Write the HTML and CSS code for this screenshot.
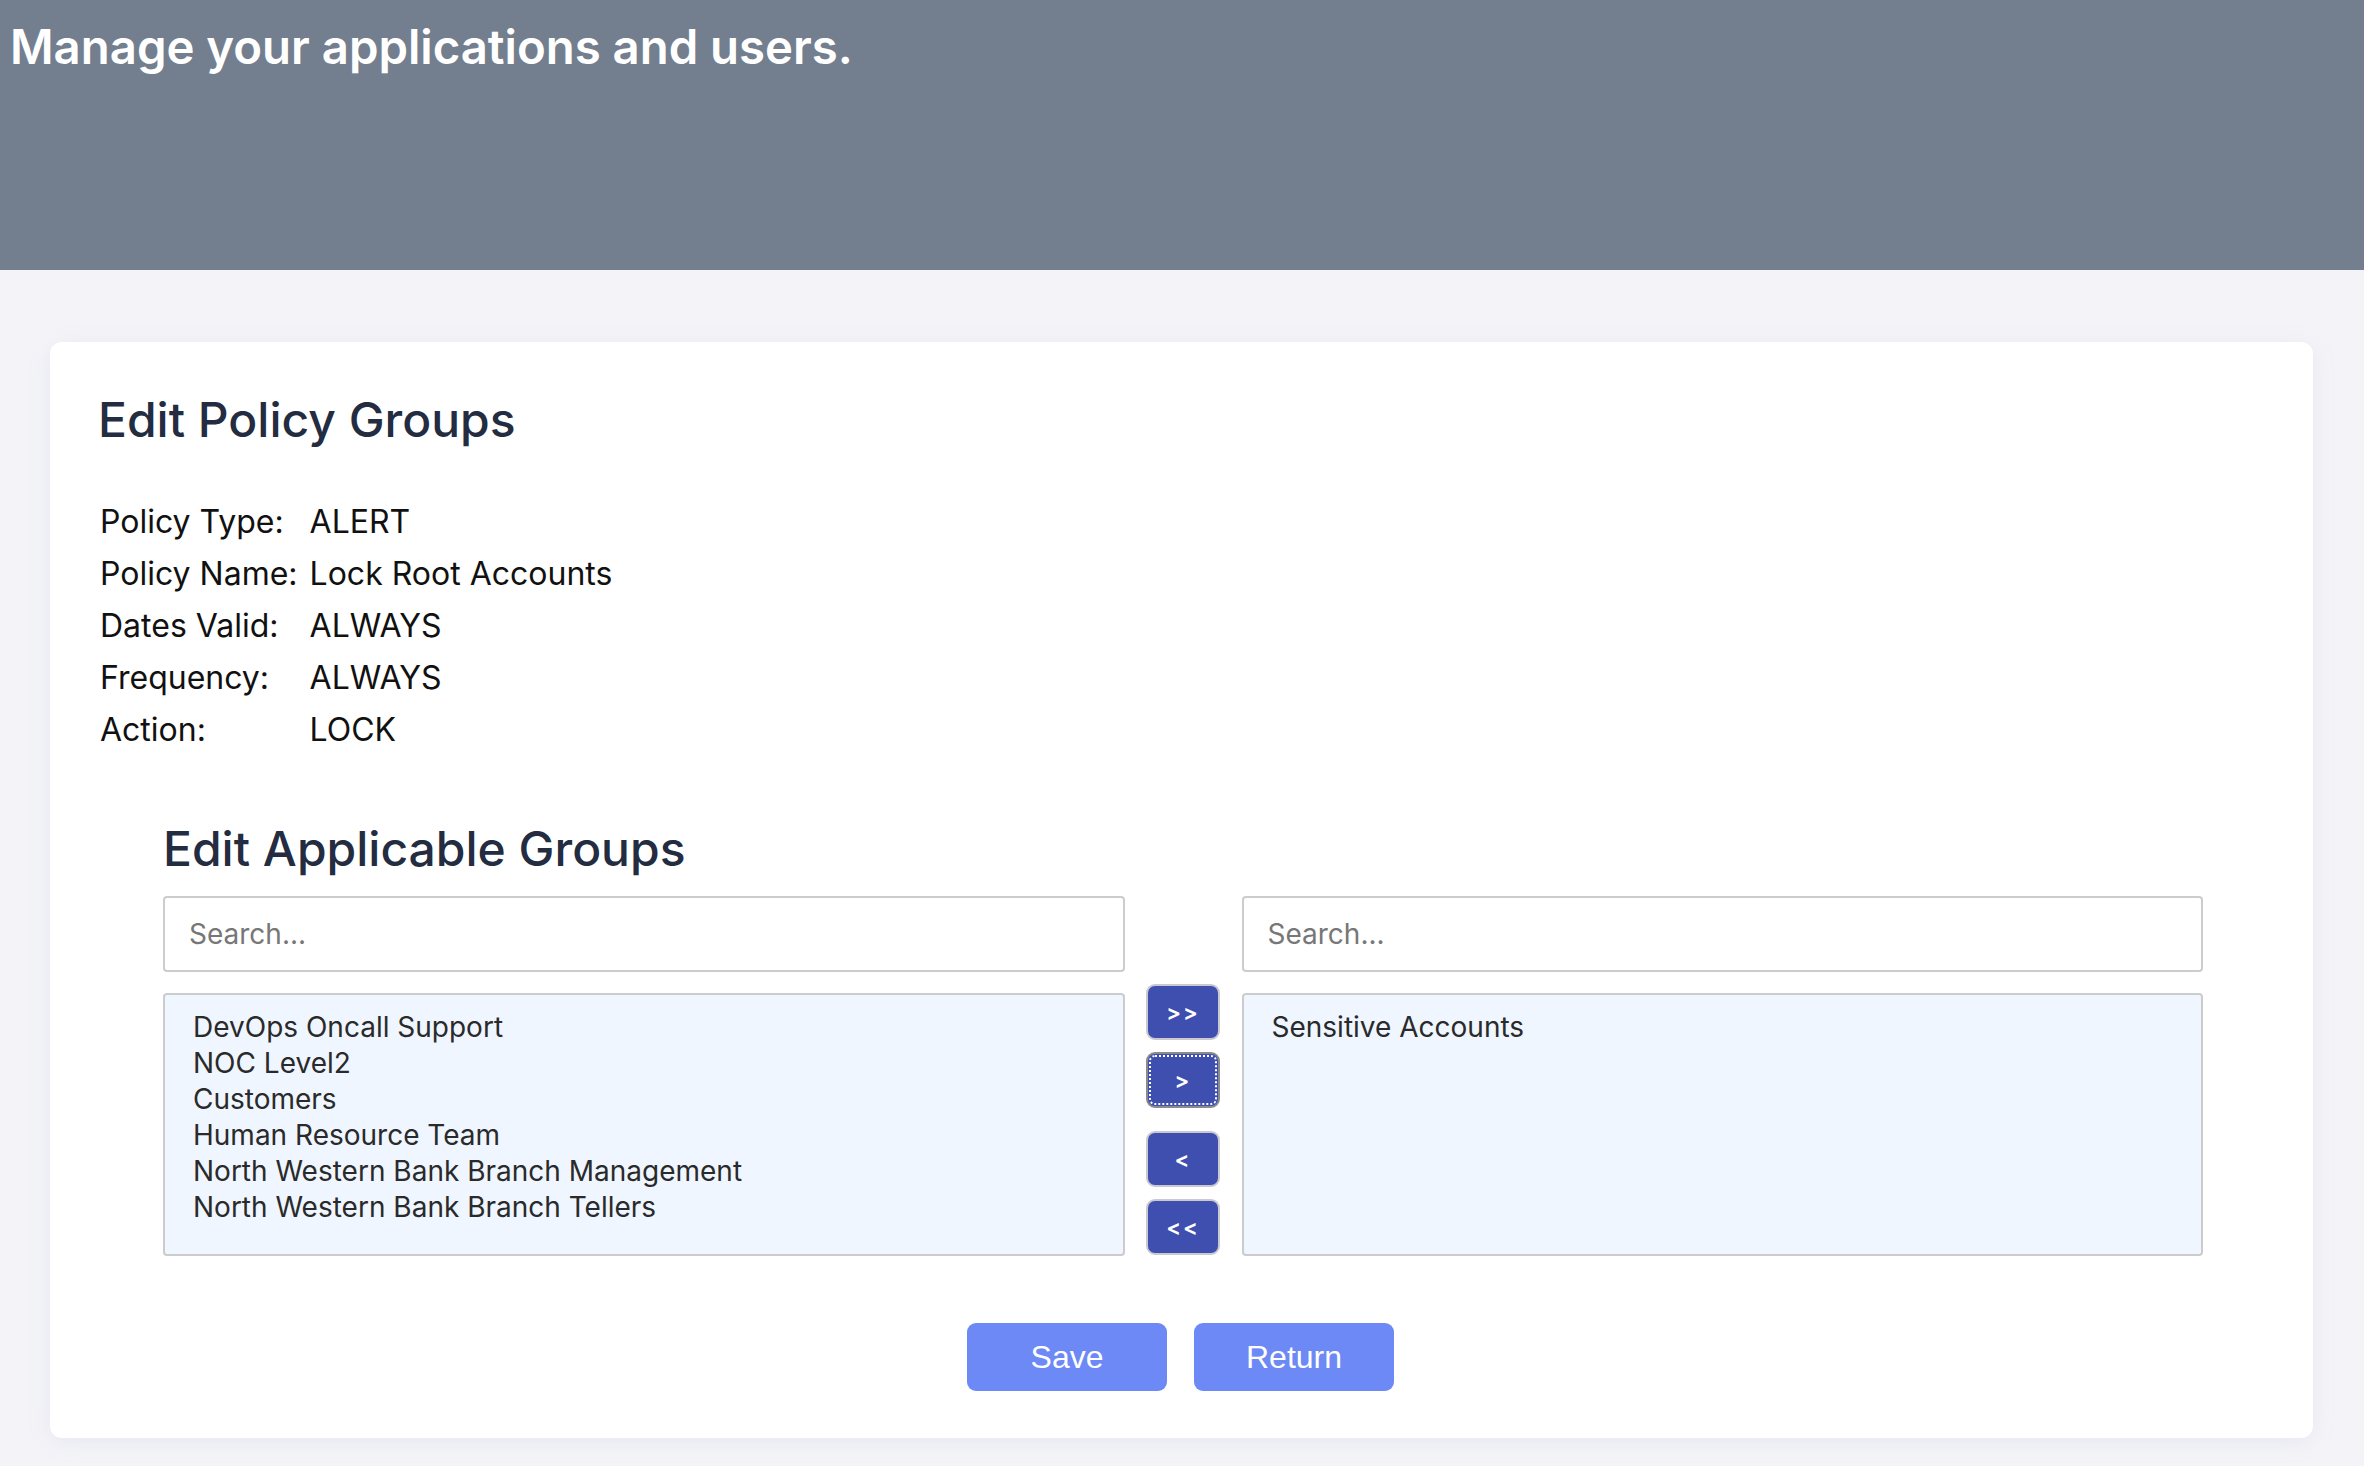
FILE: index.html
```html
<!DOCTYPE html>
<html>
<head>
<meta charset="utf-8">
<link rel="stylesheet" href="styles.css">
</head>
<body>
<header class="top">
  <h1 class="top-title">Manage your applications and users.</h1>
</header>
<main class="page">
  <section class="card">
    <h2 class="card-title">Edit Policy Groups</h2>
    <table class="info">
      <tr><td class="lbl">Policy Type:</td><td>ALERT</td></tr>
      <tr><td class="lbl">Policy Name:</td><td>Lock Root Accounts</td></tr>
      <tr><td class="lbl">Dates Valid:</td><td>ALWAYS</td></tr>
      <tr><td class="lbl">Frequency:</td><td>ALWAYS</td></tr>
      <tr><td class="lbl">Action:</td><td>LOCK</td></tr>
    </table>
    <div class="groups">
      <h2 class="groups-title">Edit Applicable Groups</h2>
      <div class="dual">
        <input class="search" type="text" placeholder="Search...">
        <div></div>
        <input class="search" type="text" placeholder="Search...">
        <div class="list">
          <div class="opt">DevOps Oncall Support</div>
          <div class="opt">NOC Level2</div>
          <div class="opt">Customers</div>
          <div class="opt">Human Resource Team</div>
          <div class="opt">North Western Bank Branch Management</div>
          <div class="opt">North Western Bank Branch Tellers</div>
        </div>
        <div class="movers">
          <button class="mv">&gt;&gt;</button>
          <button class="mv focus">&gt;</button>
          <button class="mv gap">&lt;</button>
          <button class="mv">&lt;&lt;</button>
        </div>
        <div class="list">
          <div class="opt">Sensitive Accounts</div>
        </div>
      </div>
    </div>
    <div class="actions">
      <button class="act">Save</button>
      <button class="act">Return</button>
    </div>
  </section>
</main>
</body>
</html>
```

FILE: styles.css
```css
* { box-sizing: border-box; }
html, body { margin: 0; padding: 0; }
body {
  background: #f4f4f8;
  font-family: Inter, "Noto Sans", sans-serif;
  min-height: 1466px;
}
.top {
  background: #737f8f;
  height: 270px;
  padding: 19px 10px 0;
}
.top-title {
  margin: 0;
  color: #ffffff;
  font-size: 47.3px;
  font-weight: 600;
  line-height: 1.2;
}
.page {
  padding: 72px 51px 30px 50px;
}
.card {
  background: #ffffff;
  border-radius: 12px;
  box-shadow: 0 4px 24px rgba(120, 130, 180, 0.10);
  padding: 51px 50px 47px 48px;
}
.card-title {
  margin: 0;
  color: #232c40;
  font-size: 48px;
  font-weight: 500;
  line-height: 53px;
}
.info {
  margin-top: 50px;
  margin-left: 2px;
  border-collapse: collapse;
  font-size: 32px;
  color: #111111;
}
.info td {
  padding: 0;
  height: 52px;
  line-height: 52px;
  vertical-align: middle;
}
.info .lbl { padding-right: 12px; }
.groups {
  margin: 66px 60px 0 65px;
}
.groups-title {
  margin: 0 0 21px;
  color: #232c40;
  font-size: 48px;
  font-weight: 500;
  line-height: 53px;
}
.dual {
  display: grid;
  grid-template-columns: 1fr 117px 1fr;
  row-gap: 21px;
}
.search {
  height: 76px;
  border: 2px solid #cccccc;
  border-radius: 4px;
  padding: 0 24px;
  font-family: Inter, sans-serif;
  font-size: 28px;
  color: #333;
  background: #fff;
}
.search::placeholder { color: #777777; }
.list {
  height: 263px;
  background: #eff6ff;
  border: 2px solid #cccccc;
  border-radius: 4px;
  padding: 14px 28px;
  font-size: 28px;
  color: #2a2a2a;
}
.opt { line-height: 36px; }
.movers {
  display: flex;
  flex-direction: column;
  align-items: center;
  margin-top: -9px;
}
.mv {
  width: 74px;
  height: 56px;
  margin-bottom: 12px;
  background: #3f4fb0;
  color: #ffffff;
  border: 2px solid #c9c9cf;
  border-radius: 9px;
  font-family: Inter, sans-serif;
  font-size: 22px;
  font-weight: 600;
  letter-spacing: 2px;
  padding: 0;
}
.mv.focus {
  border-color: #8b8b8b;
  outline: 2px dotted #ffffff;
  outline-offset: -5px;
}
.mv.gap { margin-top: 11px; }
.actions {
  display: flex;
  justify-content: center;
  gap: 27px;
  margin-top: 56px;
}
.act {
  width: 200px;
  height: 68px;
  background: #6c89f5;
  color: #ffffff;
  border: none;
  border-radius: 9px;
  font-family: "Liberation Sans", Arial, sans-serif;
  font-size: 32px;
}
```
